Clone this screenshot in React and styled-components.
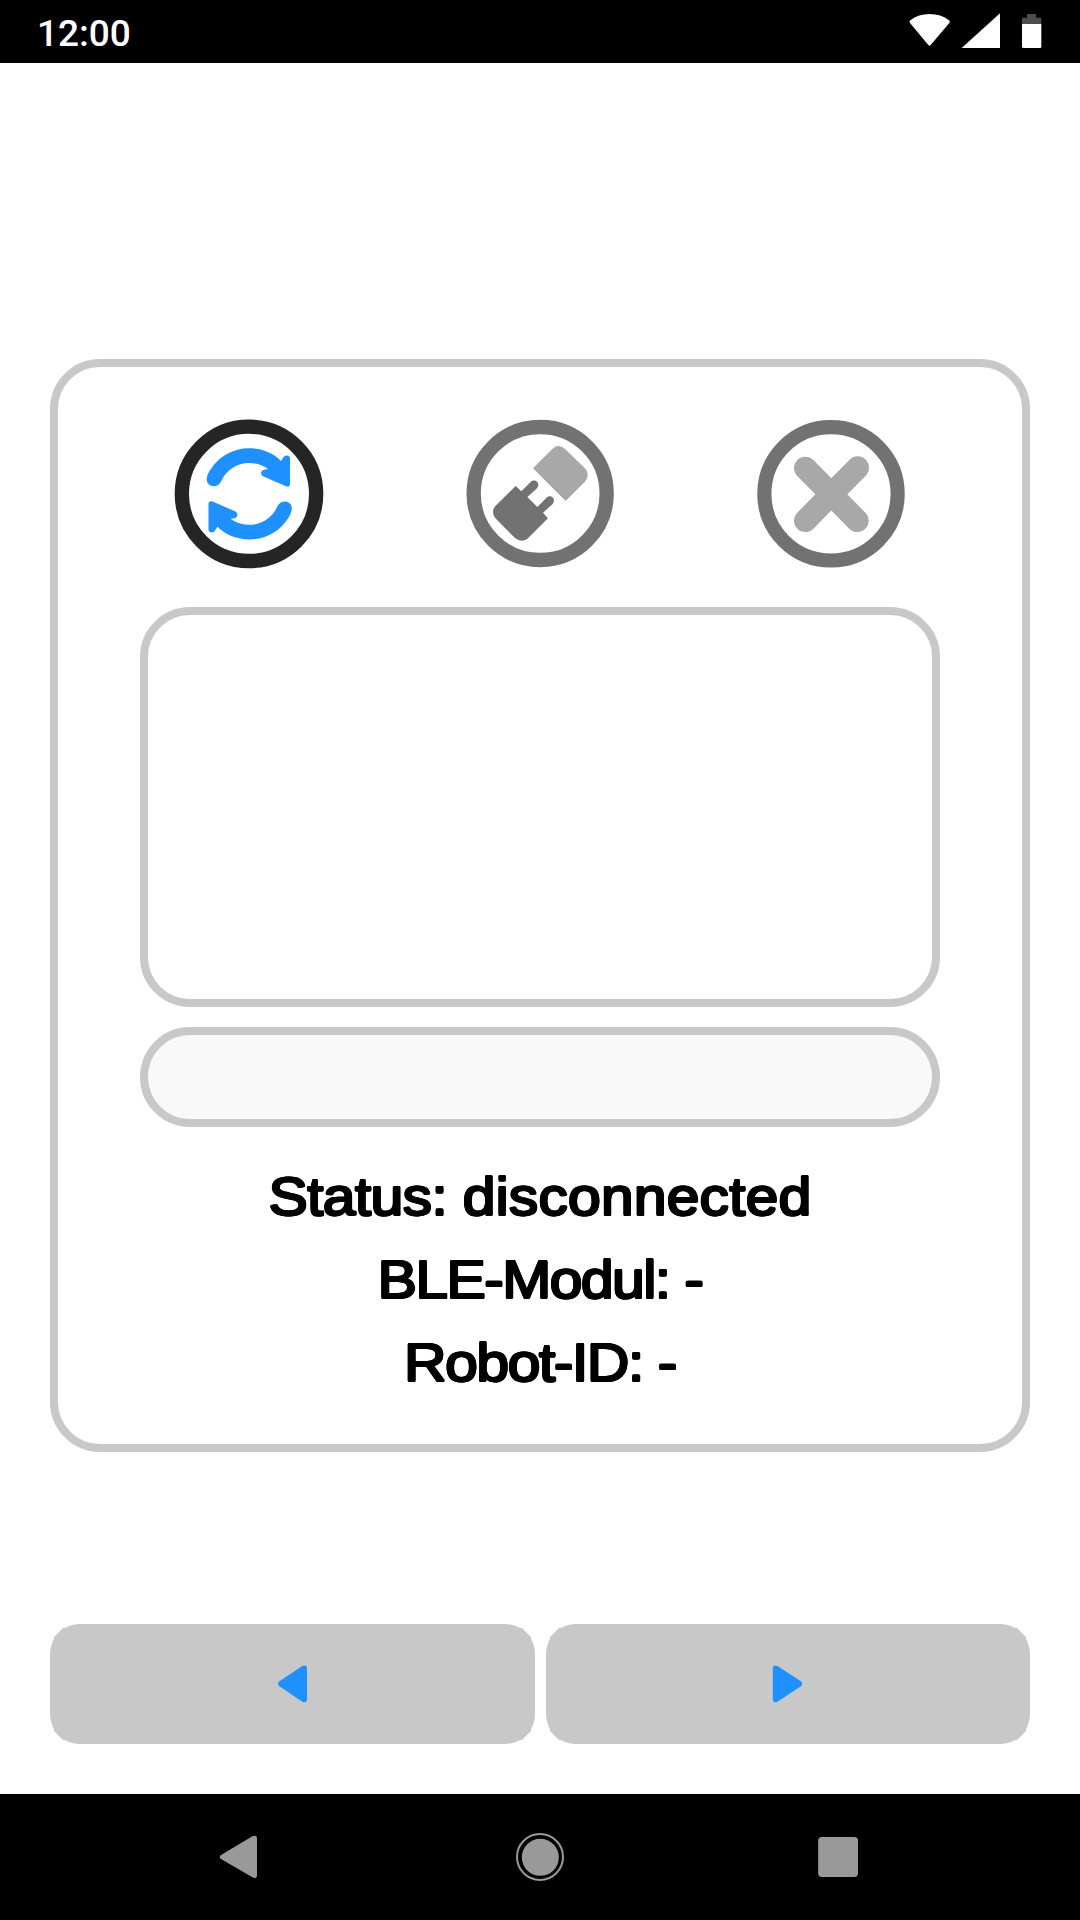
import React from "react";
import styled, { createGlobalStyle } from "styled-components";

const GlobalStyle = createGlobalStyle`
  * { box-sizing: border-box; }
  body { margin: 0; background: #fff; }
`;

const Screen = styled.div`
  display: flex;
  flex-direction: column;
  width: 1080px;
  height: 1920px;
  background: #fff;
  overflow: hidden;
`;

const StatusBar = styled.header`
  display: flex;
  align-items: center;
  justify-content: space-between;
  height: 63px;
  padding: 0 37px;
  background: #000;
`;

const Clock = styled.time`
  padding-top: 5px;
  color: #fff;
  font: 500 37px/44px Roboto, sans-serif;
`;

const StatusIcons = styled.div`
  display: flex;
  gap: 8px;
  padding-bottom: 1px;
  svg { display: block; }
  svg:last-child { margin-left: 10px; }
`;

const Content = styled.main`
  display: flex;
  flex-direction: column;
  flex: 1;
  justify-content: space-between;
  padding: 296px 50px 50px;
`;

const Card = styled.section`
  display: flex;
  flex-direction: column;
  height: 1093px;
  padding: 38px 82px 0;
  border: 8px solid #c8c8c8;
  border-radius: 50px;
`;

const Toolbar = styled.div`
  display: flex;
  justify-content: space-between;
  padding: 0 20px;
  margin-bottom: 22px;
`;

const RoundButton = styled.button`
  display: block;
  width: 180px;
  height: 180px;
  padding: 0;
  border: 0;
  background: none;
  svg { display: block; width: 100%; height: 100%; }
`;

const Field = styled.div`
  height: ${(p) => p.$height}px;
  margin-bottom: ${(p) => p.$after}px;
  border: 8px solid #c8c8c8;
  border-radius: 50px;
  background: ${(p) => p.$fill || "#fff"};
`;

const StatusLine = styled.div`
  height: 83px;
  color: #000;
  text-align: center;
  white-space: pre;
  font: 400 53px/83px "Liberation Sans", Arial, sans-serif;
  text-shadow:
    1.1px 0 #000, -1.1px 0 #000, 0 1.1px #000, 0 -1.1px #000,
    0.8px 0.8px #000, -0.8px 0.8px #000, 0.8px -0.8px #000, -0.8px -0.8px #000;
  transform: scaleX(1.11);
`;

const Word = styled.span`
  letter-spacing: ${(p) => p.$tracking}px;
`;

const Pager = styled.div`
  display: grid;
  grid-template-columns: 485px 484px;
  column-gap: 11px;
`;

const PagerButton = styled.button`
  display: flex;
  align-items: center;
  justify-content: center;
  height: 120px;
  padding: 0;
  border: 0;
  background: #c8c8c8;
  clip-path: polygon(
    0 30px, 0.6px 24px, 2.2px 18.5px, 4px 14.5px, 4px 13px, 13px 4px, 14.5px 4px, 18.5px 2.2px, 24px 0.6px, 30px 0,
    calc(100% - 30px) 0, calc(100% - 24px) 0.6px, calc(100% - 18.5px) 2.2px, calc(100% - 14.5px) 4px, calc(100% - 13px) 4px,
    calc(100% - 4px) 13px, calc(100% - 4px) 14.5px, calc(100% - 2.2px) 18.5px, calc(100% - 0.6px) 24px, 100% 30px,
    100% 90px, calc(100% - 0.6px) 96px, calc(100% - 2.2px) 101.5px, calc(100% - 4px) 105.5px, calc(100% - 4px) 107px,
    calc(100% - 13px) 116px, calc(100% - 14.5px) 116px, calc(100% - 18.5px) 117.8px, calc(100% - 24px) 119.4px, calc(100% - 30px) 120px,
    30px 120px, 24px 119.4px, 18.5px 117.8px, 14.5px 116px, 13px 116px, 4px 107px, 4px 105.5px, 2.2px 101.5px, 0.6px 96px, 0 90px
  );
`;

const NavBar = styled.nav`
  display: flex;
  align-items: center;
  height: 126px;
  padding-left: 218px;
  background: #000;
  svg { display: block; fill: #999; }
  svg:nth-child(2) { margin: 0 251px 0 255px; }
`;

const WifiIcon = () => (
  <svg width="44" height="38" viewBox="84 36 132 114" fill="#fff">
    <path d="M90 69Q86 65 91 61Q115 42 149 42Q183 42 207 61Q212 65 208 69L152 135Q149 139 145 135Z" />
  </svg>
);

const SignalIcon = () => (
  <svg width="42" height="38" viewBox="240 36 126 114" fill="#fff">
    <path d="M360 40V144H245Z" />
  </svg>
);

const BatteryIcon = () => (
  <svg width="23" height="38" viewBox="420 36 69 114">
    <path d="M426 72V57Q426 53 430 53H441V42H468V53H480Q484 53 484 57V72Z" fill="#4d4d4d" />
    <path d="M426 72H484V140Q484 144 480 144H430Q426 144 426 140Z" fill="#fff" />
  </svg>
);

const ARROW =
  "M140 223C140 213 146 201 153 191C178 154 220 130 267 130C304 130 338 143 363 168L371 156C374 149 390 149 390 160V236Q390 247 378 244L309 214C300 209 302 195 312 194L324 192C307 180 289 174 267 174C231 174 199 195 184 228C174 252 140 247 140 223Z";

const RefreshIcon = () => (
  <svg viewBox="0 0 540 540">
    <circle cx="267" cy="266.5" r="201.5" fill="none" stroke="#252525" strokeWidth="43" />
    <g fill="#1e90ff">
      <path d={ARROW} />
      <path transform="rotate(180 267.75 266.75)" d={ARROW} />
    </g>
  </svg>
);

const PlugIcon = () => (
  <svg viewBox="0 0 540 540">
    <circle cx="270.5" cy="265.5" r="199.5" fill="none" stroke="#727272" strokeWidth="43" />
    <path d="M249 190L307 132Q314 123 325 123Q336 123 345 132L404 189Q413 197 413 210Q413 221 406 229L347 288Z" fill="#a8a8a8" />
    <path d="M197 243L214 259L242 231C255 219 273 234 261 250L232 276L262 306L288 280C301 265 320 281 308 297L279 323L294 340L237 397Q228 407 216 407Q204 407 195 399L139 343Q129 333 129 321Q129 310 137 302Z" fill="#727272" />
  </svg>
);

const CloseIcon = () => (
  <svg viewBox="0 0 540 540">
    <circle cx="273" cy="266.5" r="200" fill="none" stroke="#727272" strokeWidth="42.5" />
    <path d="M196 189L352 347M353 188L196 347" stroke="#a8a8a8" strokeWidth="68" strokeLinecap="round" />
  </svg>
);

const PreviousIcon = () => (
  <svg width="33" height="42" viewBox="738 189 99 126" fill="#1e90ff">
    <path d="M748 244L817 198Q831 192 831 206V297Q831 311 817 305L748 259Q740 252 748 244Z" />
  </svg>
);

const NextIcon = () => (
  <svg width="33" height="42" viewBox="816.5 189 99 126" fill="#1e90ff">
    <path d="M903 244L833 198Q819 192 819 206V297Q819 311 833 305L903 259Q911 252 903 244Z" />
  </svg>
);

export default function App() {
  return (
    <Screen>
      <GlobalStyle />
      <StatusBar>
        <Clock>12:00</Clock>
        <StatusIcons>
          <WifiIcon />
          <SignalIcon />
          <BatteryIcon />
        </StatusIcons>
      </StatusBar>
      <Content>
        <Card>
          <Toolbar>
            <RoundButton aria-label="Scan"><RefreshIcon /></RoundButton>
            <RoundButton aria-label="Connect"><PlugIcon /></RoundButton>
            <RoundButton aria-label="Disconnect"><CloseIcon /></RoundButton>
          </Toolbar>
          <Field $height={400} $after={20} />
          <Field $height={100} $after={28} $fill="#f9f9f9" />
          <StatusLine><Word $tracking={-0.6}>Status: </Word><Word $tracking={0.15}>disconnected</Word></StatusLine>
          <StatusLine><Word $tracking={-1.4}>BLE-Modul: -</Word></StatusLine>
          <StatusLine><Word $tracking={-1.3}>Robot-ID: -</Word></StatusLine>
        </Card>
        <Pager>
          <PagerButton aria-label="Previous"><PreviousIcon /></PagerButton>
          <PagerButton aria-label="Next"><NextIcon /></PagerButton>
        </Pager>
      </Content>
      <NavBar>
        <svg width="42" height="48" viewBox="84 159 126 144">
          <path d="M92 226L187 169Q201 163 201 177V284Q201 299 187 292L92 236Q87 231 92 226Z" />
        </svg>
        <svg width="50" height="50" viewBox="975 156 150 150">
          <circle cx="1050" cy="231" r="69" style={{ fill: "none" }} stroke="#999" strokeWidth="6" />
          <circle cx="1051" cy="232" r="55.5" />
        </svg>
        <svg width="44" height="46" viewBox="108 1302 132 138">
          <rect x="114.5" y="1311" width="119.5" height="120" rx="11" />
        </svg>
      </NavBar>
    </Screen>
  );
}
